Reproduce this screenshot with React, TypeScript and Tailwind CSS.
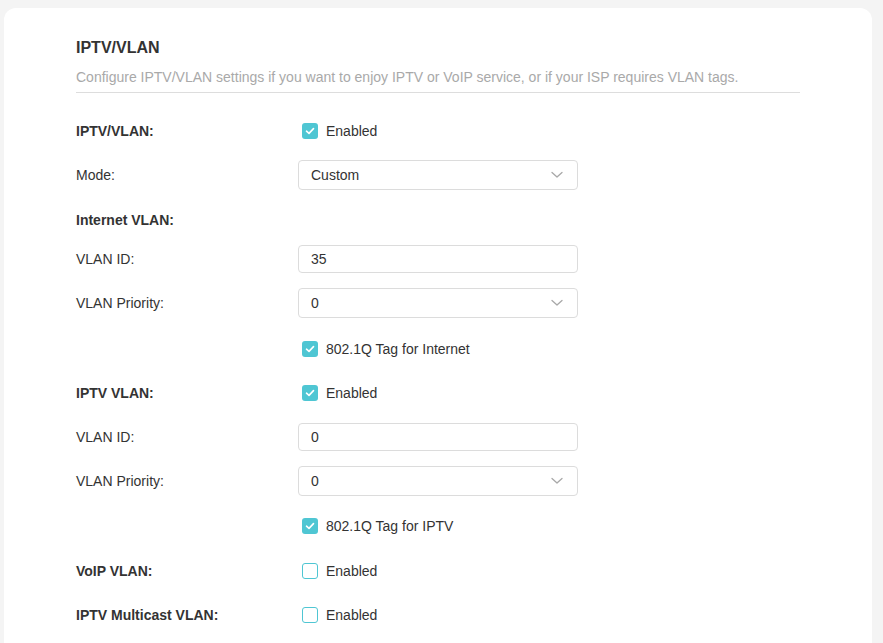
import React from "react";

const font = { fontFamily: '"Liberation Sans", Arial, sans-serif' };

function Check({ checked, label }: { checked: boolean; label: string }) {
  return (
    <label className="flex items-center gap-2 pl-1 text-[14px] text-[#333]">
      {checked ? (
        <span className="flex h-4 w-4 items-center justify-center rounded-[3px] bg-[#4fc6d3]">
          <svg width="10" height="8" viewBox="0 0 10 8" fill="none">
            <path d="M1.5 4.2 L4 6.4 L8.5 1.6" stroke="white" strokeWidth="1.6" strokeLinecap="round" strokeLinejoin="round" />
          </svg>
        </span>
      ) : (
        <span className="h-4 w-4 rounded-[3px] border-[1.5px] border-[#4fc6d3] bg-white" />
      )}
      <span>{label}</span>
    </label>
  );
}

function Select({ value }: { value: string }) {
  return (
    <div className="flex h-[30px] w-[280px] items-center justify-between rounded-[4px] border border-[#dcdcdc] bg-white pl-3 pr-[14px] text-[14px] text-[#333]">
      <span>{value}</span>
      <svg width="12" height="8" viewBox="0 0 12 8" fill="none">
        <path d="M1 1.5 L6 6 L11 1.5" stroke="#a8a8a8" strokeWidth="1.3" strokeLinecap="round" strokeLinejoin="round" />
      </svg>
    </div>
  );
}

function TextInput({ value }: { value: string }) {
  return (
    <div className="flex h-[28px] w-[280px] items-center rounded-[4px] border border-[#dcdcdc] bg-white pl-3 text-[14px] text-[#333]">
      {value}
    </div>
  );
}

function Row({
  label,
  bold,
  children,
  extra = "",
}: {
  label?: string;
  bold?: boolean;
  children?: React.ReactNode;
  extra?: string;
}) {
  return (
    <div className={`flex h-[44px] items-center ${extra}`}>
      <div className={`w-[222px] text-[14px] text-[#333] ${bold ? "font-bold" : ""}`}>{label}</div>
      <div className="flex items-center">{children}</div>
    </div>
  );
}

export default function App() {
  return (
    <div className="min-h-[643px] bg-[#f4f4f4] pl-1 pr-[11px] pt-2" style={font}>
      <div className="h-[700px] rounded-t-[12px] bg-white px-[72px] pt-[28px]">
        <h1 className="text-[16px] font-bold leading-6 text-[#333]">IPTV/VLAN</h1>
        <p className="mt-[7px] text-[14px] leading-5 text-[#a9a9a9]">
          Configure IPTV/VLAN settings if you want to enjoy IPTV or VoIP service, or if your ISP requires VLAN tags.
        </p>
        <div className="mt-[5px] h-px bg-[#dddddd]" />
        <div className="pt-[16px]">
          <Row label="IPTV/VLAN:" bold>
            <Check checked label="Enabled" />
          </Row>
          <Row label="Mode:">
            <Select value="Custom" />
          </Row>
          <Row label="Internet VLAN:" bold extra="mt-px" />
          <Row label="VLAN ID:" extra="-mt-[5px]">
            <TextInput value="35" />
          </Row>
          <Row label="VLAN Priority:">
            <Select value="0" />
          </Row>
          <Row extra="mt-[2px]">
            <Check checked label="802.1Q Tag for Internet" />
          </Row>
          <Row label="IPTV VLAN:" bold>
            <Check checked label="Enabled" />
          </Row>
          <Row label="VLAN ID:">
            <TextInput value="0" />
          </Row>
          <Row label="VLAN Priority:">
            <Select value="0" />
          </Row>
          <Row extra="mt-px">
            <Check checked label="802.1Q Tag for IPTV" />
          </Row>
          <Row label="VoIP VLAN:" bold extra="mt-px">
            <Check checked={false} label="Enabled" />
          </Row>
          <Row label="IPTV Multicast VLAN:" bold>
            <Check checked={false} label="Enabled" />
          </Row>
        </div>
      </div>
    </div>
  );
}
